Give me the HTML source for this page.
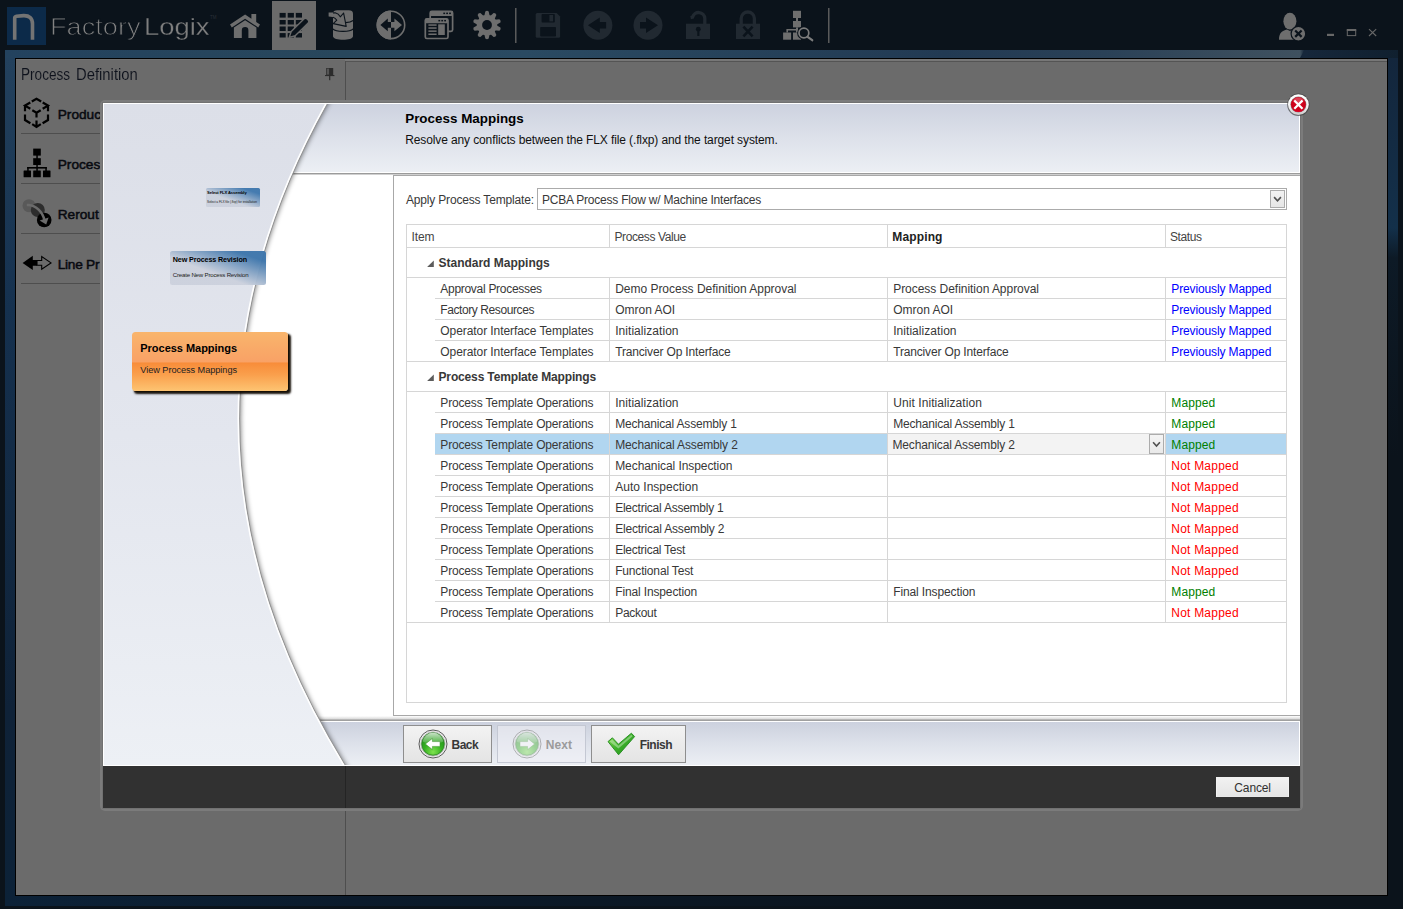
<!DOCTYPE html>
<html lang="en">
<head>
<meta charset="utf-8">
<title>FactoryLogix - Process Mappings</title>
<style>
*{box-sizing:border-box;margin:0;padding:0}
html,body{width:1403px;height:909px;overflow:hidden;background:#0b131b}
body{position:relative;font-family:"Liberation Sans",sans-serif;font-size:12px;color:#383838;-webkit-font-smoothing:antialiased}
.abs{position:absolute}
.t{position:absolute;white-space:nowrap;line-height:20px;height:20px}
svg{position:absolute;overflow:visible}
/* top bar */
#topbar{position:absolute;left:0;top:0;width:1403px;height:50px;background:#0b131b}
#logo{position:absolute;left:7px;top:7px;width:39px;height:38px;background:#0c2a49}
#brand{position:absolute;left:50px;top:11px;height:30px;line-height:30px;font-size:23px;white-space:nowrap;color:#6c6c6c}
#brand b{font-weight:400;color:#7c7c7c}
#brand .thin{-webkit-text-stroke:0.9px #0b131b}
#seltab{position:absolute;left:272px;top:1px;width:44px;height:49px;background:#6b6b6b}
.vsep{position:absolute;top:8px;width:2px;height:35px;background:linear-gradient(to right,#5a5a5a 0,#5a5a5a 50%,#33383d 50%)}
/* frame */
#frame{position:absolute;left:5px;top:50px;width:1393px;height:856px;
 background:
  linear-gradient(to bottom, rgba(11,19,27,0) 0px, rgba(11,19,27,0) 10px, rgba(11,19,27,0.0) 100%),
  linear-gradient(to right,#23425e 0px,#28475c 340px,#2a4a62 520px,#223a53 940px,#2a4157 1100px,#3a4d5d 1240px,#3f515f 1295px,#16273b 1299px,#10202f 1393px)}
#frameL{position:absolute;left:5px;top:58px;width:10px;height:848px;background:linear-gradient(to bottom,#23415d 0,#15314f 250px,#0f2238 650px,#0c2238 100%)}
#frameR{position:absolute;left:1388px;top:58px;width:10px;height:848px;background:linear-gradient(to bottom,#13263c 0,#13304a 170px,#0d1a26 200px,#0b131b 400px)}
#frameB{position:absolute;left:5px;top:895px;width:1393px;height:11px;background:linear-gradient(to right,#0c2238 0,#0b1b2c 350px,#0b131b 1000px)}
#main{position:absolute;left:15px;top:58px;width:1373px;height:838px;border:1px solid #000;background:#6b6b6b}
#mainhl{position:absolute;left:345px;top:59px;width:1042px;height:2px;background:#777}
.sideline{position:absolute;left:21px;width:324px;height:1px;background:#4e4e4e}
.sidelbl{position:absolute;left:57px;font-size:14px;font-weight:700;color:#0d1018;white-space:nowrap;line-height:20px}
/* dialog */
#dlgborder{position:absolute;left:100px;top:100px;width:1203px;height:711px;border-radius:5px;background:#7b7b7b}
#dlgtop{position:absolute;left:103px;top:103px;width:1197px;height:663px;background:#fff;overflow:hidden}
#dlgband{position:absolute;left:103px;top:766px;width:1197px;height:42px;background:#313131}
#hdr{position:absolute;left:1px;top:1px;width:1195px;height:68px;background:linear-gradient(to bottom,#cdd2df 0,#dde1ea 50%,#eceff4 100%)}
#hdrline{position:absolute;left:1px;top:70px;width:1196px;height:1px;background:#9b9b9b}
#ftr{position:absolute;left:1px;top:619px;width:1195px;height:43px;background:linear-gradient(to bottom,#ccd1de 0,#dde1ea 50%,#eceff4 100%)}
#panel{position:absolute;left:290px;top:72px;width:907px;height:541px;border:1px solid #a8a8a8;border-right:none;background:#fff}
.btn{position:absolute;top:622px;height:38px;border:1px solid #8e8e8e;background:linear-gradient(to bottom,#f3f3f3 0,#ebebeb 50%,#e4e4e4 100%)}
.btn span{position:absolute;top:9px;font-weight:700;font-size:12.5px;line-height:20px;color:#333;white-space:nowrap}
/* table */
#tbl{position:absolute;left:303px;top:121px;width:881px;height:479px;border:1px solid #d6d6d6;background:#fff}
.hl{position:absolute;height:1px;background:#d6d6d6}
.vl{position:absolute;width:1px;background:#d6d6d6}
.c-blue{color:#0000ff}.c-green{color:#008000}.c-red{color:#ff0000}
.hd{color:#444}
.b{font-weight:700}
</style>
</head>
<body>
<div id="topbar">
 <div id="logo"></div>
 <div id="seltab"></div>
 <div class="t" style="left:49.6px;top:17px;font-size:23.2px;transform-origin:0 50%;transform:scaleX(1.1719);color:#828282;-webkit-text-stroke:0.85px #0b131b;">Factory</div><div class="t" style="left:143.6px;top:17px;font-size:23.2px;transform-origin:0 50%;transform:scaleX(1.1833);color:#7e7e7e;-webkit-text-stroke:0.3px #0b131b;">Logix</div>
 <div class="abs" style="left:210px;top:15px;font-size:4.5px;line-height:6px;color:#2a3038">TM</div>
 <div class="vsep" style="left:515px"></div>
 <div class="vsep" style="left:828px"></div>
 <svg width="1403" height="50" viewBox="0 0 1403 50" style="left:0;top:0">
  <!-- logo n -->
  <path d="M14.7,39.8 V18 Q14.7,16.6 16.6,16.3 L23.6,15.6 Q32.5,15.4 32.5,24 V39.8" fill="none" stroke="#747474" stroke-width="3.6"/>
  <g fill="#6e6e6e">
   <!-- home -->
   <path d="M230,24.6 L245.1,14.6 L251.4,18.8 V14 H256.2 V22 L260,24.6 L258.2,27.4 L245.1,18.7 L231.8,27.4 Z"/>
   <path d="M233.9,27.6 L245.1,20.2 L256.4,27.6 V38 H248.4 V30.4 A3.3,3.3 0 0 0 241.8,30.4 V38 H233.9 Z"/>
   <!-- database with arrow -->
   <path d="M333,13.6 Q333,10.2 337.4,10.2 H348.6 Q353,10.2 353,13.6 V36.2 C353,41 333,41 333,36.2 Z"/>
  </g>
  <g fill="none" stroke="#0b131b" stroke-width="1.2">
   <path d="M345.6,22.6 C349,22.4 351.6,21.6 353.2,20.4"/>
   <path d="M332.8,28.8 C336,32.2 350,32.2 353.2,28.8"/>
  </g>
  <path d="M329,13 L335.2,12.8 Q338.6,13.6 340.3,16.8 L343.6,13 L346.2,26.4 L333.2,23.6 L336.8,20.2 Q335.4,17.8 333,17.2 L329,16.2 Z" fill="#6e6e6e" stroke="#0b131b" stroke-width="1.1" stroke-linejoin="round"/>
  <path d="M328.6,12.6 H333 V16.9 L328.6,16.4 Z" fill="#6e6e6e"/>
  <!-- grid + pencil (selected) -->
  <g fill="#0b131b">
   <rect x="279.6" y="12.9" width="6.1" height="4.7"/><rect x="287.7" y="12.9" width="6.2" height="4.7"/><rect x="295.8" y="12.9" width="6.2" height="4.7"/>
   <rect x="279.6" y="20" width="6.1" height="4.5"/><rect x="287.7" y="20" width="6.2" height="4.5"/><rect x="295.8" y="20" width="6.2" height="4.5"/>
   <rect x="279.6" y="26.5" width="6.1" height="4.5"/><rect x="287.7" y="26.5" width="6.2" height="4.5"/><rect x="295.8" y="26.5" width="6.2" height="4.5"/>
   <rect x="279.6" y="33.1" width="6.1" height="4.4"/><rect x="287.7" y="33.1" width="6.2" height="4.4"/><rect x="295.8" y="33.1" width="6.2" height="4.4"/>
  </g>
  <path d="M289.2,37.4 L291.2,31.6 L304.4,18.6 Q305.8,17.6 307.2,19 L308.4,20.4 Q309.4,21.8 308.2,23 L295.2,35.8 Z" fill="#0b131b" stroke="#6b6b6b" stroke-width="1.4" stroke-linejoin="round"/>
  <!-- circle arrows -->
  <circle cx="391" cy="24.9" r="13.7" fill="#0b131b" stroke="#6e6e6e" stroke-width="1.6"/>
  <path d="M391,10.4 A14.5,14.5 0 0 0 391,39.4 Z" fill="#6e6e6e"/>
  <path d="M380.4,24.9 L387.8,18.6 V22 H391 V27.8 H387.8 V31.2 Z" fill="#0b131b"/>
  <path d="M402,24.9 L394.4,18.6 V22 H391 V27.8 H394.4 V31.2 Z" fill="#6e6e6e"/>
  <!-- windows -->
  <rect x="430.2" y="11.3" width="22.4" height="20" rx="1.6" fill="#0b131b" stroke="#6e6e6e" stroke-width="1.7"/>
  <rect x="430.2" y="11.3" width="22.4" height="4.6" rx="1.2" fill="#6e6e6e"/>
  <g fill="#0b131b"><rect x="443.3" y="12.6" width="1.8" height="1.5"/><rect x="446.2" y="12.6" width="1.8" height="1.5"/><rect x="449.1" y="12.6" width="1.8" height="1.5"/></g>
  <rect x="425.3" y="18.8" width="22.7" height="19.7" rx="1.6" fill="#0b131b" stroke="#6e6e6e" stroke-width="1.7"/>
  <rect x="425.3" y="18.8" width="22.7" height="4.4" rx="1.2" fill="#6e6e6e"/>
  <g fill="#0b131b"><rect x="438.4" y="19.9" width="1.8" height="1.5"/><rect x="441.3" y="19.9" width="1.8" height="1.5"/><rect x="444.2" y="19.9" width="1.8" height="1.5"/></g>
  <g fill="#6e6e6e">
   <rect x="428.4" y="24.3" width="8.2" height="1.5"/><rect x="428.4" y="27.3" width="8.2" height="1.5"/><rect x="428.4" y="30.4" width="8.2" height="1.5"/><rect x="428.4" y="33.5" width="8.2" height="1.5"/>
   <rect x="438.2" y="24.3" width="6.6" height="10.7"/>
  </g>
  <!-- gear -->
  <g fill="#6e6e6e"><path d="M484.2,16.5 L485.3,11.4 Q487,9.9 488.7,11.4 L489.8,16.5 Z" transform="rotate(0 487 25)"/><path d="M484.2,16.5 L485.3,11.4 Q487,9.9 488.7,11.4 L489.8,16.5 Z" transform="rotate(36 487 25)"/><path d="M484.2,16.5 L485.3,11.4 Q487,9.9 488.7,11.4 L489.8,16.5 Z" transform="rotate(72 487 25)"/><path d="M484.2,16.5 L485.3,11.4 Q487,9.9 488.7,11.4 L489.8,16.5 Z" transform="rotate(108 487 25)"/><path d="M484.2,16.5 L485.3,11.4 Q487,9.9 488.7,11.4 L489.8,16.5 Z" transform="rotate(144 487 25)"/><path d="M484.2,16.5 L485.3,11.4 Q487,9.9 488.7,11.4 L489.8,16.5 Z" transform="rotate(180 487 25)"/><path d="M484.2,16.5 L485.3,11.4 Q487,9.9 488.7,11.4 L489.8,16.5 Z" transform="rotate(216 487 25)"/><path d="M484.2,16.5 L485.3,11.4 Q487,9.9 488.7,11.4 L489.8,16.5 Z" transform="rotate(252 487 25)"/><path d="M484.2,16.5 L485.3,11.4 Q487,9.9 488.7,11.4 L489.8,16.5 Z" transform="rotate(288 487 25)"/><path d="M484.2,16.5 L485.3,11.4 Q487,9.9 488.7,11.4 L489.8,16.5 Z" transform="rotate(324 487 25)"/><circle cx="487" cy="25" r="10.3"/></g>
  <circle cx="487" cy="25" r="4.9" fill="#0b131b"/>
  <!-- disabled group -->
  <g fill="#212931">
   <!-- save -->
   <path d="M537.2,13.1 H556.6 L560.1,16.6 V36.2 Q560.1,37.7 558.6,37.7 H537.2 Q535.7,37.7 535.7,36.2 V14.6 Q535.7,13.1 537.2,13.1 Z"/>
   <!-- arrows -->
   <circle cx="597.9" cy="25.3" r="14.5"/>
   <circle cx="648" cy="25.3" r="14.5"/>
   <!-- unlock body -->
   <rect x="686" y="23.7" width="24" height="15.3"/>
   <rect x="736" y="23.7" width="24" height="15.3"/>
  </g>
  <g fill="#0b131b">
   <rect x="541.6" y="14" width="13.2" height="8.5" rx="0.8"/>
   <rect x="540.2" y="26.9" width="15.8" height="9.6" rx="0.8"/>
   <path d="M587.9,25.3 L599.8,17.6 V22 H606.1 V28.6 H599.8 V33 Z"/>
   <path d="M658,25.3 L646,17.6 V22 H640 V28.6 H646 V33 Z"/>
   <circle cx="698.3" cy="29.2" r="2.4"/><rect x="697.3" y="29.5" width="2.1" height="6.5"/>
  </g>
  <rect x="549.4" y="15" width="3.7" height="6.4" fill="#212931"/>
  <path d="M690.6,17.6 L692.6,17.2 A6.2,6.2 0 0 1 704.8,18.4 V24" fill="none" stroke="#212931" stroke-width="3.3"/>
  <path d="M741.2,24 V18.6 A6.6,6.6 0 0 1 754.4,18.6 V24" fill="none" stroke="#212931" stroke-width="3.3"/>
  <path d="M743.4,26.6 L752.6,36.4 M752.6,26.6 L743.4,36.4" fill="none" stroke="#0b131b" stroke-width="2.6"/>
  <!-- hierarchy + magnifier -->
  <g fill="#6e6e6e">
   <rect x="793" y="10.8" width="8" height="7.2"/>
   <rect x="796" y="18" width="2" height="3.2"/>
   <rect x="793" y="21" width="8" height="6.4"/>
   <rect x="796" y="27.4" width="2" height="5.2"/>
   <rect x="783.1" y="32.5" width="8" height="7.2"/>
   <rect x="793" y="32.5" width="8" height="7.2"/>
   <path d="M786.4,32.6 V29 H797 V30.6 H788 V32.6 Z"/>
  </g>
  <circle cx="803.9" cy="33" r="5" fill="#0b131b" stroke="#0b131b" stroke-width="3.6"/>
  <path d="M807.6,36.8 L812.4,40.4" stroke="#0b131b" stroke-width="4.2" stroke-linecap="round"/>
  <circle cx="803.9" cy="33" r="4.9" fill="#0b131b" stroke="#7c7c7c" stroke-width="1.7"/>
  <path d="M807.6,36.8 L812.2,40.2" stroke="#7c7c7c" stroke-width="2.3" stroke-linecap="round"/>
  <!-- user -->
  <g fill="#6e6e6e">
   <ellipse cx="1289.9" cy="21.2" rx="6.5" ry="8.4"/>
   <path d="M1279,39.7 C1279,33 1282,31 1287,29.6 L1290,31 L1293,29.6 C1296,30.4 1298,31.5 1299,33 V39.7 Z"/>
  </g>
  <circle cx="1298.4" cy="33.7" r="7.3" fill="#6e6e6e" stroke="#0b131b" stroke-width="1.2"/>
  <path d="M1295.2,30.5 L1301.6,36.9 M1301.6,30.5 L1295.2,36.9" stroke="#0b131b" stroke-width="2.2"/>
  <!-- window controls -->
  <rect x="1327" y="33.8" width="7" height="2.2" fill="#686868"/>
  <rect x="1347.3" y="30" width="8.4" height="5.6" fill="none" stroke="#686868" stroke-width="1"/>
  <rect x="1346.8" y="29" width="9.4" height="2" fill="#686868"/>
  <path d="M1369,29.2 L1376.2,36 M1376.2,29.2 L1369,36" stroke="#686868" stroke-width="1.1"/>
 </svg>
</div>
<div id="frame"></div>
<div id="frameL"></div>
<div id="frameR"></div>
<div id="frameB"></div>
<svg width="12" height="8" viewBox="0 0 12 8" style="left:1296px;top:50px"><polygon points="8.5,0 12,0 12,8 4,8" fill="#16273b"/></svg>
<div id="main"></div>
<div id="mainhl"></div>
<div class="abs" style="left:16px;top:59px;width:329px;height:1px;background:#717171"></div>
<div class="abs" style="left:345px;top:61px;width:1042px;height:1px;background:#545454"></div>
<div class="abs" style="left:345px;top:61px;width:1px;height:834px;background:#4e4e4e"></div>
<div class="t" style="left:20.8px;top:65px;font-size:15.6px;transform-origin:0 50%;transform:scaleX(0.8714);color:#0e121c;-webkit-text-stroke:0.12px #6b6b6b;">Process</div><div class="t" style="left:76.4px;top:65px;font-size:15.6px;transform-origin:0 50%;transform:scaleX(0.9505);color:#0e121c;-webkit-text-stroke:0.12px #6b6b6b;">Definition</div>
<svg width="12" height="14" viewBox="0 0 12 14" style="left:324px;top:67px">
 <rect x="2.2" y="1" width="7" height="7" fill="#2c2c2c"/><rect x="2.9" y="1.6" width="2.2" height="6" fill="#555"/>
 <rect x="1" y="8" width="9.4" height="1.1" fill="#2c2c2c"/><rect x="5.1" y="9" width="1.2" height="4.2" fill="#2c2c2c"/>
</svg>
<div class="sideline" style="top:133px"></div>
<div class="sideline" style="top:183px"></div>
<div class="sideline" style="top:233px"></div>
<div class="sideline" style="top:283px"></div>
<div class="t" style="left:57.7px;top:105px;font-size:13.7px;color:#080a10;-webkit-text-stroke:0.5px #080a10;">Produc</div><div class="t" style="left:57.7px;top:155px;font-size:13.7px;color:#080a10;-webkit-text-stroke:0.5px #080a10;">Proces</div><div class="t" style="left:57.7px;top:205px;font-size:13.7px;color:#080a10;-webkit-text-stroke:0.5px #080a10;">Rerout</div><div class="t" style="left:57.7px;top:255px;font-size:13.7px;letter-spacing:-0.254px;color:#080a10;-webkit-text-stroke:0.5px #080a10;">Line Pr</div>
<svg width="40" height="200" viewBox="20 95 40 200" style="left:20px;top:95px">
 <!-- cube -->
 <g fill="none" stroke="#000" stroke-width="2.2">
  <path d="M31.8,101.5 L36.5,98.7 L41.2,101.5"/>
  <path d="M30.3,102.5 L25,105.6 L30.3,108.8 M25,105 V111.2"/>
  <path d="M42.7,102.5 L48,105.6 L42.7,108.8 M48,105 V111.2"/>
  <path d="M32.3,110.3 L36.5,112.8 L40.7,110.3 M36.5,112.6 V117.6"/>
  <path d="M25,114.4 V120 L30.4,123.2"/>
  <path d="M48,114.4 V120 L42.6,123.2"/>
  <path d="M36.5,120.4 V126.6 M32.2,124.2 L36.5,127 L40.8,124.2"/>
 </g>
 <!-- hierarchy -->
 <g fill="#000">
  <rect x="33.2" y="148.6" width="7.6" height="7"/><rect x="36.3" y="155" width="1.5" height="4"/>
  <rect x="33.2" y="158.2" width="7.6" height="6.8"/><rect x="36.3" y="164.5" width="1.5" height="7"/>
  <rect x="27.2" y="167" width="19.6" height="1.6"/>
  <rect x="27.2" y="167" width="1.5" height="4"/><rect x="45.3" y="167" width="1.5" height="4"/>
  <rect x="23.6" y="170.4" width="7.4" height="6.8" rx="0.5"/><rect x="33.2" y="170.4" width="7.6" height="6.8" rx="0.5"/><rect x="43" y="170.4" width="7.5" height="6.8" rx="0.5"/>
 </g>
 <!-- reroute -->
 <circle cx="29" cy="205.7" r="6.5" fill="#595959"/>
 <circle cx="37.8" cy="210" r="7" fill="#2d2d2d"/>
 <circle cx="44.2" cy="220" r="7.3" fill="#000"/>
 <path d="M26.8,205 H28.6 C36,205.4 42.6,211.6 44.6,220.6" fill="none" stroke="#6b6b6b" stroke-width="2.6"/>
 <path d="M39.6,220.4 L48.6,217.4 L46.2,224.4 Z" fill="#6b6b6b"/>
 <!-- arrows -->
 <path d="M22.6,262.9 L32.8,255.8 V260 H37 V265.8 H32.8 V270 Z" fill="#000"/>
 <path d="M51,262.9 L41.7,256.6 V260.5 H37 V265.3 H41.7 V269.2 Z" fill="#6b6b6b" stroke="#000" stroke-width="1.1"/>
</svg>
<div id="dlgborder"></div>
<div class="abs" style="left:102px;top:102px;width:1199px;height:707px;background:#717171"></div>
<div id="dlgband"></div>
<div class="abs" style="left:345px;top:766px;width:1px;height:42px;background:#242424"></div>
<div id="dlgtop">
<div id="hdr"></div><div id="hdrline"></div>
<div class="abs" style="left:1px;top:71px;width:1196px;height:1px;background:#d0d0d0"></div>
<div class="abs" style="left:1px;top:613px;width:1196px;height:3px;background:linear-gradient(to bottom,#fff,#dadada)"></div>
<div class="abs" style="left:1px;top:616px;width:1196px;height:1px;background:#b8b8b8"></div>
<div class="abs" style="left:1px;top:617px;width:1196px;height:1px;background:#a0a0a0"></div>
<div id="ftr"></div>
<div id="panel"></div>
<svg width="1197" height="663" viewBox="0 0 1197 663" style="left:0;top:0">
 <defs>
  <linearGradient id="lp" x1="0" y1="0" x2="0" y2="1"><stop offset="0" stop-color="#dcdfe8"/><stop offset="0.5" stop-color="#e3e6ee"/><stop offset="1" stop-color="#edf0f5"/></linearGradient>
  <filter id="sh" x="-10%" y="-5%" width="130%" height="110%"><feGaussianBlur stdDeviation="2.5"/></filter>
  <clipPath id="cp"><rect x="1" y="1" width="1195" height="661"/></clipPath>
 </defs>
 <g clip-path="url(#cp)">
  <path d="M-20,-20 H236.8 L225.7,0 Q41.1,331.5 243.7,663 L255.9,683 H-20 Z" fill="#000" opacity="0.5" filter="url(#sh)"/>
  <path d="M1,1 H224 Q39.4,331.5 242,662 H1 Z" fill="url(#lp)"/>
  <path d="M224.6,0 Q40,331.5 242.6,663" fill="none" stroke="#939393" stroke-width="1.1"/>
  <path d="M223.3,0 Q38.7,331.5 241.3,663" fill="none" stroke="#fff" stroke-width="1.6"/>
 </g>
</svg>
<div class="abs" style="left:103px;top:85px;width:54px;height:19px;border-radius:1.5px;background:linear-gradient(to top right,rgba(204,209,221,.96) 0,rgba(204,209,221,.96) 40%,rgba(64,120,174,.97) 84%)"></div>
<div class="abs" style="left:67px;top:148px;width:96px;height:34px;border-radius:2.5px;background:linear-gradient(to top right,rgba(204,209,221,.96) 0,rgba(204,209,221,.96) 40%,rgba(62,118,172,.97) 84%)"></div>
<div class="abs" style="left:29px;top:229px;width:156px;height:59px;border-radius:3.5px;box-shadow:2.5px 2.5px 2px rgba(15,8,0,.95),1px 1px 0 rgba(60,30,0,.6);background:linear-gradient(to bottom,#f9b56c 0,#f9a968 30%,#f9a266 50%,#f88d3a 53%,#fa9f4c 72%,#fdc472 100%)"></div>
<div class="t" style="left:104.1px;top:80px;font-size:4.1px;font-weight:700;letter-spacing:-0.093px;color:#000;">Select FLX Assembly</div>
<div class="t" style="left:104.1px;top:89px;font-size:3.2px;letter-spacing:-0.067px;color:#222;">Select a FLX file (.flxp) for installation</div>
<div class="t" style="left:69.8px;top:147px;font-size:7.2px;font-weight:700;letter-spacing:-0.125px;color:#000;">New Process Revision</div>
<div class="t" style="left:69.8px;top:162px;font-size:6.1px;letter-spacing:-0.195px;color:#222;">Create New Process Revision</div>
<div class="t" style="left:37.3px;top:235px;font-size:11px;font-weight:700;letter-spacing:-0.031px;color:#000;">Process Mappings</div>
<div class="t" style="left:37.3px;top:257px;font-size:9.2px;letter-spacing:-0.057px;color:#222;">View Process Mappings</div>
<div class="t" style="left:302.2px;top:6px;font-size:13.4px;font-weight:700;letter-spacing:0.017px;color:#000;">Process Mappings</div>
<div class="t" style="left:302.2px;top:27px;letter-spacing:-0.115px;color:#111;">Resolve any conflicts between the FLX file (.flxp) and the target system.</div>
<div class="t" style="left:303px;top:87px;letter-spacing:-0.176px;">Apply Process Template:</div>
<div class="abs" style="left:434px;top:85px;width:750px;height:22px;border:1px solid #ababab;background:#fff"></div>
<div class="abs" style="left:1167px;top:87px;width:15px;height:18px;border:1px solid #acacac;background:linear-gradient(#f2f2f2,#e6e6e6)"></div>
<svg width="15" height="18" viewBox="0 0 15 18" style="left:1167px;top:87px"><path d="M4.1,7.1 L7.5,10.8 L10.9,7.1" fill="none" stroke="#505050" stroke-width="1.6"/></svg>
<div class="t" style="left:439px;top:87px;letter-spacing:-0.216px;">PCBA Process Flow w/ Machine Interfaces</div>
<div id="tbl"></div>
<div class="abs" style="left:332px;top:331px;width:851px;height:20px;background:#b1d6f0"></div>
<div class="abs" style="left:785px;top:331px;width:277px;height:20px;background:#f3f3f3"></div>
<div class="abs" style="left:1046px;top:331px;width:15px;height:20px;border:1px solid #acacac;background:linear-gradient(#f4f4f4,#e9e9e9)"></div>
<svg width="15" height="20" viewBox="0 0 15 20" style="left:1046px;top:331px"><path d="M4.1,8.3 L7.5,12 L10.9,8.3" fill="none" stroke="#505050" stroke-width="1.6"/></svg>
<div class="hl" style="left:304px;top:144px;width:879px;"></div>
<div class="vl" style="left:506px;top:122px;height:22px;"></div>
<div class="vl" style="left:784px;top:122px;height:22px;"></div>
<div class="vl" style="left:1062px;top:122px;height:22px;"></div>
<div class="t hd" style="left:308.4px;top:124px;letter-spacing:-0.036px;">Item</div>
<div class="t hd" style="left:511.5px;top:124px;letter-spacing:-0.399px;">Process Value</div>
<div class="t hd" style="left:789.3px;top:124px;font-weight:700;letter-spacing:0.139px;color:#222;">Mapping</div>
<div class="t hd" style="left:1067px;top:124px;letter-spacing:-0.389px;">Status</div>
<div class="hl" style="left:304px;top:174px;width:879px;"></div>
<svg width="8" height="8" viewBox="0 0 8 8" style="left:322.5px;top:157px"><path d="M7.8,0.5 V7 H1.1 Z" fill="#5c5c5c"/></svg>
<div class="t" style="left:335.5px;top:150px;font-weight:700;letter-spacing:-0.008px;">Standard Mappings</div>
<div class="t" style="left:337.3px;top:176px;letter-spacing:-0.290px;">Approval Processes</div>
<div class="t" style="left:512.2px;top:176px;letter-spacing:-0.025px;">Demo Process Definition Approval</div>
<div class="t" style="left:790.2px;top:176px;letter-spacing:-0.035px;">Process Definition Approval</div>
<div class="t c-blue" style="left:1068.3px;top:176px;letter-spacing:-0.127px;">Previously Mapped</div>
<div class="hl" style="left:332px;top:195px;width:851px;"></div>
<div class="t" style="left:337.3px;top:197px;letter-spacing:-0.412px;">Factory Resources</div>
<div class="t" style="left:512.2px;top:197px;">Omron AOI</div>
<div class="t" style="left:790.2px;top:197px;">Omron AOI</div>
<div class="t c-blue" style="left:1068.3px;top:197px;letter-spacing:-0.127px;">Previously Mapped</div>
<div class="hl" style="left:332px;top:216px;width:851px;"></div>
<div class="t" style="left:337.3px;top:218px;letter-spacing:-0.072px;">Operator Interface Templates</div>
<div class="t" style="left:512.2px;top:218px;letter-spacing:0.050px;">Initialization</div>
<div class="t" style="left:790.2px;top:218px;letter-spacing:0.050px;">Initialization</div>
<div class="t c-blue" style="left:1068.3px;top:218px;letter-spacing:-0.127px;">Previously Mapped</div>
<div class="hl" style="left:332px;top:237px;width:851px;"></div>
<div class="t" style="left:337.3px;top:239px;letter-spacing:-0.072px;">Operator Interface Templates</div>
<div class="t" style="left:512.2px;top:239px;letter-spacing:-0.161px;">Tranciver Op Interface</div>
<div class="t" style="left:790.2px;top:239px;letter-spacing:-0.161px;">Tranciver Op Interface</div>
<div class="t c-blue" style="left:1068.3px;top:239px;letter-spacing:-0.127px;">Previously Mapped</div>
<div class="hl" style="left:304px;top:258px;width:879px;"></div>
<div class="vl" style="left:506px;top:175px;height:83px;"></div>
<div class="vl" style="left:784px;top:175px;height:83px;"></div>
<div class="vl" style="left:1062px;top:175px;height:83px;"></div>
<svg width="8" height="8" viewBox="0 0 8 8" style="left:322.5px;top:271px"><path d="M7.8,0.5 V7 H1.1 Z" fill="#5c5c5c"/></svg>
<div class="hl" style="left:304px;top:288px;width:879px;"></div>
<div class="t" style="left:335.5px;top:264px;font-weight:700;letter-spacing:-0.146px;">Process Template Mappings</div>
<div class="t" style="left:337.3px;top:290px;letter-spacing:-0.156px;">Process Template Operations</div>
<div class="t" style="left:512.2px;top:290px;letter-spacing:0.050px;">Initialization</div>
<div class="t" style="left:790.2px;top:290px;letter-spacing:0.075px;">Unit Initialization</div>
<div class="t c-green" style="left:1068.3px;top:290px;letter-spacing:0.087px;">Mapped</div>
<div class="hl" style="left:332px;top:309px;width:851px;"></div>
<div class="t" style="left:337.3px;top:311px;letter-spacing:-0.156px;">Process Template Operations</div>
<div class="t" style="left:512.2px;top:311px;letter-spacing:-0.185px;">Mechanical Assembly 1</div>
<div class="t" style="left:790.2px;top:311px;letter-spacing:-0.181px;">Mechanical Assembly 1</div>
<div class="t c-green" style="left:1068.3px;top:311px;letter-spacing:0.087px;">Mapped</div>
<div class="hl" style="left:332px;top:330px;width:851px;"></div>
<div class="t" style="left:337.3px;top:332px;letter-spacing:-0.156px;">Process Template Operations</div>
<div class="t" style="left:512.2px;top:332px;letter-spacing:-0.138px;">Mechanical Assembly 2</div>
<div class="t" style="left:789.4px;top:332px;letter-spacing:-0.138px;">Mechanical Assembly 2</div>
<div class="t c-green" style="left:1068.3px;top:332px;letter-spacing:0.087px;">Mapped</div>
<div class="hl" style="left:332px;top:351px;width:851px;"></div>
<div class="t" style="left:337.3px;top:353px;letter-spacing:-0.156px;">Process Template Operations</div>
<div class="t" style="left:512.2px;top:353px;letter-spacing:-0.073px;">Mechanical Inspection</div>
<div class="t c-red" style="left:1068.3px;top:353px;letter-spacing:0.212px;">Not Mapped</div>
<div class="hl" style="left:332px;top:372px;width:851px;"></div>
<div class="t" style="left:337.3px;top:374px;letter-spacing:-0.156px;">Process Template Operations</div>
<div class="t" style="left:512.2px;top:374px;letter-spacing:0.018px;">Auto Inspection</div>
<div class="t c-red" style="left:1068.3px;top:374px;letter-spacing:0.212px;">Not Mapped</div>
<div class="hl" style="left:332px;top:393px;width:851px;"></div>
<div class="t" style="left:337.3px;top:395px;letter-spacing:-0.156px;">Process Template Operations</div>
<div class="t" style="left:512.2px;top:395px;letter-spacing:-0.242px;">Electrical Assembly 1</div>
<div class="t c-red" style="left:1068.3px;top:395px;letter-spacing:0.212px;">Not Mapped</div>
<div class="hl" style="left:332px;top:414px;width:851px;"></div>
<div class="t" style="left:337.3px;top:416px;letter-spacing:-0.156px;">Process Template Operations</div>
<div class="t" style="left:512.2px;top:416px;letter-spacing:-0.208px;">Electrical Assembly 2</div>
<div class="t c-red" style="left:1068.3px;top:416px;letter-spacing:0.212px;">Not Mapped</div>
<div class="hl" style="left:332px;top:435px;width:851px;"></div>
<div class="t" style="left:337.3px;top:437px;letter-spacing:-0.156px;">Process Template Operations</div>
<div class="t" style="left:512.2px;top:437px;letter-spacing:-0.268px;">Electrical Test</div>
<div class="t c-red" style="left:1068.3px;top:437px;letter-spacing:0.212px;">Not Mapped</div>
<div class="hl" style="left:332px;top:456px;width:851px;"></div>
<div class="t" style="left:337.3px;top:458px;letter-spacing:-0.156px;">Process Template Operations</div>
<div class="t" style="left:512.2px;top:458px;letter-spacing:-0.167px;">Functional Test</div>
<div class="t c-red" style="left:1068.3px;top:458px;letter-spacing:0.212px;">Not Mapped</div>
<div class="hl" style="left:332px;top:477px;width:851px;"></div>
<div class="t" style="left:337.3px;top:479px;letter-spacing:-0.156px;">Process Template Operations</div>
<div class="t" style="left:512.2px;top:479px;letter-spacing:-0.134px;">Final Inspection</div>
<div class="t" style="left:790.2px;top:479px;letter-spacing:-0.122px;">Final Inspection</div>
<div class="t c-green" style="left:1068.3px;top:479px;letter-spacing:0.087px;">Mapped</div>
<div class="hl" style="left:332px;top:498px;width:851px;"></div>
<div class="t" style="left:337.3px;top:500px;letter-spacing:-0.156px;">Process Template Operations</div>
<div class="t" style="left:512.2px;top:500px;letter-spacing:-0.294px;">Packout</div>
<div class="t c-red" style="left:1068.3px;top:500px;letter-spacing:0.212px;">Not Mapped</div>
<div class="hl" style="left:304px;top:519px;width:879px;"></div>
<div class="vl" style="left:506px;top:289px;height:230px;"></div>
<div class="vl" style="left:784px;top:289px;height:230px;"></div>
<div class="vl" style="left:1062px;top:289px;height:230px;"></div>
<div class="btn" style="left:300px;width:89px"></div>
<div class="btn" style="left:394px;width:89px;border-color:#c4c8d3;background:rgba(240,241,245,.55)"></div>
<div class="btn" style="left:488px;width:95px"></div>
<svg width="30" height="30" viewBox="0 0 30 30" style="left:314.5px;top:625.5px">
 <defs>
  <radialGradient id="gb" cx="0.5" cy="0.85" r="0.9"><stop offset="0" stop-color="#7ee24e"/><stop offset="0.45" stop-color="#34b021"/><stop offset="1" stop-color="#1f8a1a"/></radialGradient>
  <linearGradient id="gl" x1="0" y1="0" x2="0" y2="1"><stop offset="0" stop-color="#fff" stop-opacity=".75"/><stop offset="1" stop-color="#fff" stop-opacity=".1"/></linearGradient>
 </defs>
 <circle cx="15" cy="15" r="14" fill="#f4f4f4" stroke="#5a5a5a" stroke-width="1"/>
 <circle cx="15" cy="15" r="12.2" fill="none" stroke="#b9b9b9" stroke-width="0.9"/>
 <circle cx="15" cy="15" r="11.3" fill="url(#gb)" stroke="#2a7a22" stroke-width="0.8"/>
 <path d="M4.6,12.4 A10.6,10.6 0 0 1 25.4,12.4 C20,15.6 10,15.6 4.6,12.4 Z" fill="url(#gl)"/>
 <path d="M7.4,15 L14.4,9.4 V12.6 H22 V17.4 H14.4 V20.6 Z" fill="#fff" stroke="#3a8a2a" stroke-width="0.5"/>
</svg>
<svg width="30" height="30" viewBox="0 0 30 30" style="left:408.7px;top:626px;opacity:.42">
 <circle cx="15" cy="15" r="14" fill="#f4f4f4" stroke="#5a5a5a" stroke-width="1"/>
 <circle cx="15" cy="15" r="12.2" fill="none" stroke="#b9b9b9" stroke-width="0.9"/>
 <circle cx="15" cy="15" r="11.3" fill="url(#gb)" stroke="#2a7a22" stroke-width="0.8"/>
 <path d="M4.6,12.4 A10.6,10.6 0 0 1 25.4,12.4 C20,15.6 10,15.6 4.6,12.4 Z" fill="url(#gl)"/>
 <path d="M22.6,15 L15.6,9.4 V12.6 H8 V17.4 H15.6 V20.6 Z" fill="#fff" stroke="#3a8a2a" stroke-width="0.5"/>
</svg>
<svg width="30" height="26" viewBox="0 0 30 26" style="left:503px;top:628px">
 <defs><linearGradient id="ck" x1="0" y1="0" x2="1" y2="1"><stop offset="0" stop-color="#8fe05a"/><stop offset="0.5" stop-color="#3db02a"/><stop offset="1" stop-color="#1e8a18"/></linearGradient></defs>
 <path d="M2,10.6 L6.4,6.8 L12.4,13.2 L25.4,2.2 L28.6,5.6 L12.6,23.8 Z" fill="url(#ck)" stroke="#1f8a1c" stroke-width="0.9" stroke-linejoin="round"/>
 <path d="M3.6,10.6 L6.4,8.4 L12.4,14.8 L25.4,3.8 L26.6,5.2 L12.4,17.6 Z" fill="#fff" opacity=".35"/>
</svg>

<div class="t" style="left:348.6px;top:632px;font-weight:700;letter-spacing:-0.572px;">Back</div>
<div class="t" style="left:442.7px;top:632px;font-weight:700;letter-spacing:0.096px;color:#9b9b9b;">Next</div>
<div class="t" style="left:536.7px;top:632px;font-weight:700;letter-spacing:-0.491px;">Finish</div>
</div>
<div class="abs" style="left:1216px;top:777px;width:73px;height:20px;border:1px solid #f1f1f1;border-bottom-color:#e8e8e8;background:linear-gradient(to bottom,#f1f1f1 0,#ebebeb 50%,#e5e5e5 100%)"></div>
<div class="t" style="left:1234.3px;top:778px;letter-spacing:-0.127px;color:#303030;">Cancel</div>
<svg width="26" height="26" viewBox="0 0 26 26" style="left:1285px;top:91px">
 <defs><radialGradient id="rb" cx="0.5" cy="0.3" r="0.8"><stop offset="0" stop-color="#d8102a"/><stop offset="0.6" stop-color="#cc0018"/><stop offset="1" stop-color="#e00028"/></radialGradient>
 <linearGradient id="ring" x1="0" y1="0" x2="0" y2="1"><stop offset="0" stop-color="#fff"/><stop offset="0.6" stop-color="#f4f4f4"/><stop offset="1" stop-color="#c9c9c9"/></linearGradient></defs>
 <circle cx="13.4" cy="13.8" r="11.2" fill="#3e3e3e" opacity="0.7"/>
 <circle cx="13.4" cy="13.6" r="10.4" fill="url(#ring)"/>
 <circle cx="13.4" cy="13.6" r="8" fill="#8e8e8e"/>
 <circle cx="13.4" cy="13.6" r="7.5" fill="url(#rb)"/>
 <ellipse cx="13.4" cy="9.6" rx="5" ry="3" fill="#fff" opacity="0.22"/>
 <path d="M9.3,9.5 L17.5,17.7 M17.5,9.5 L9.3,17.7" stroke="#fff" stroke-width="2.3"/>
</svg>
</body>
</html>
